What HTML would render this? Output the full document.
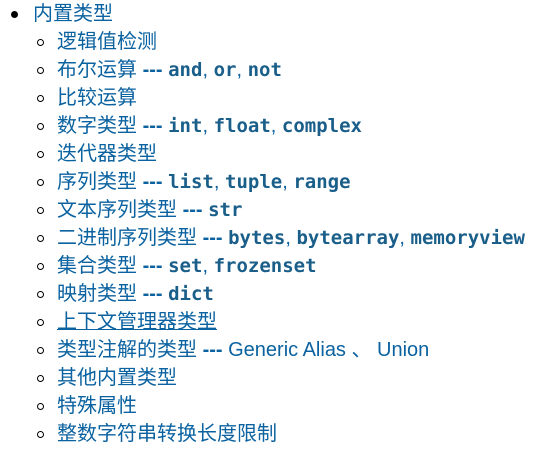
<html><head><style>
body{margin:0;background:#fff;font-family:"Liberation Sans","Noto Sans CJK SC",sans-serif;font-size:20px;color:#0b62a0;}
ul{margin:0;padding:0;list-style:none}
li{height:28px;line-height:28px;position:relative;white-space:nowrap}
.top{position:absolute;left:33px;top:0px}
.top>li::before{content:"";position:absolute;left:-22px;top:11px;width:7px;height:7px;border-radius:50%;background:#000}
.sub li{padding-left:24px}
.sub li::before{content:"";position:absolute;left:4px;top:11px;width:5px;height:5px;border:1.3px solid #000;border-radius:50%}
code{font-family:"DejaVu Sans Mono","Liberation Mono",monospace;font-size:19px;font-weight:bold;color:#1a5e8a}
b{font-weight:bold}
u{text-decoration:underline;text-decoration-thickness:1px}
</style></head><body>
<ul class="top"><li>内置类型
<ul class="sub">
<li>逻辑值检测</li>
<li>布尔运算 <b>---</b> <code>and</code>, <code>or</code>, <code>not</code></li>
<li>比较运算</li>
<li>数字类型 <b>---</b> <code>int</code>, <code>float</code>, <code>complex</code></li>
<li>迭代器类型</li>
<li>序列类型 <b>---</b> <code>list</code>, <code>tuple</code>, <code>range</code></li>
<li>文本序列类型 <b>---</b> <code>str</code></li>
<li>二进制序列类型 <b>---</b> <code>bytes</code>, <code>bytearray</code>, <code>memoryview</code></li>
<li>集合类型 <b>---</b> <code>set</code>, <code>frozenset</code></li>
<li>映射类型 <b>---</b> <code>dict</code></li>
<li><u>上下文管理器类型</u></li>
<li>类型注解的类型 <b>---</b> Generic Alias 、 Union</li>
<li>其他内置类型</li>
<li>特殊属性</li>
<li>整数字符串转换长度限制</li>
</ul></li></ul>
</body></html>
